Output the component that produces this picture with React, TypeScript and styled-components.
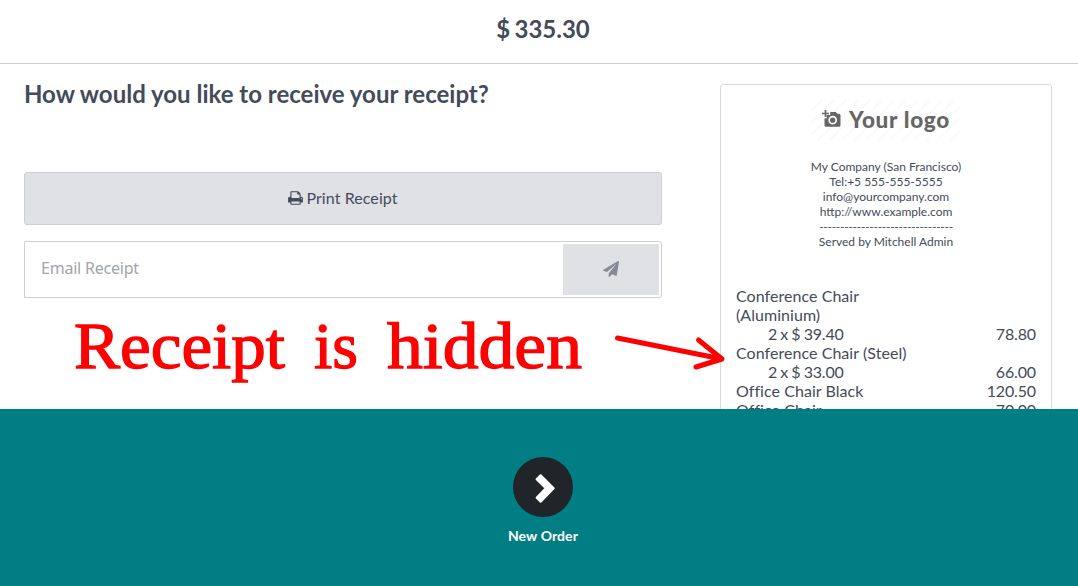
import React from "react";
import styled, { createGlobalStyle } from "styled-components";

const GlobalStyle = createGlobalStyle`
  * { box-sizing: border-box; }
  html, body { margin: 0; overflow: hidden; }
  body { background: #fff; color: #444b5a; font-family: Lato, sans-serif; font-size: 16px; }
`;

const Screen = styled.div`
  position: relative;
  display: flex;
  flex-direction: column;
  width: 1086px;
  height: 586px;
  overflow: hidden;
`;
const Header = styled.header`
  flex: 0 0 64px;
  padding-top: 14px;
  border-bottom: 1px solid #c9ccd2;
  text-align: center;
  font-size: 24px;
  font-weight: 700;
  line-height: 30px;
  word-spacing: -1.5px;
`;
const Content = styled.main`
  flex: 0 0 345px;
  display: flex;
  align-items: flex-start;
  gap: 58px;
  padding-left: 24px;
  overflow: hidden;
`;
const Options = styled.section`
  width: 638px;
  padding-top: 15px;
`;
const Title = styled.h2`
  margin: 0 0 63px;
  font-size: 24px;
  font-weight: 700;
  line-height: 30px;
`;
const PrintButton = styled.button`
  display: flex;
  align-items: center;
  justify-content: center;
  gap: 3px;
  width: 100%;
  height: 53px;
  margin-bottom: 16px;
  padding: 0 0 2px;
  border: 1px solid #cfcfd1;
  border-radius: 3px;
  background: #e0e1e5;
  color: inherit;
  font: inherit;
  letter-spacing: 0.08px;
`;
const EmailRow = styled.div`
  display: flex;
  height: 57px;
  padding: 2px;
  border: 1px solid #cfcfd1;
  border-radius: 0 3px 3px 0;
`;
const EmailInput = styled.input`
  flex: 1;
  min-width: 0;
  padding: 0 14px 3px;
  border: 0;
  background: none;
  font: 16px "Noto Sans", sans-serif;
  letter-spacing: -0.22px;
  &::placeholder { color: #a1a4aa; opacity: 1; }
`;
const SendButton = styled.button`
  display: grid;
  place-items: center;
  width: 96px;
  padding: 0 0 1px;
  border: 0;
  background: #e0e1e5;
  color: #858994;
`;
const Receipt = styled.section`
  width: 332px;
  height: 500px;
  margin-top: 20px;
  padding: 15px;
  border: 1px solid #d9d9db;
  border-radius: 3px;
`;
const Logo = styled.div`
  display: flex;
  align-items: center;
  gap: 8px;
  width: 150px;
  height: 40px;
  margin: 0 auto 19px;
  padding: 0 0 2px 11px;
  background: repeating-linear-gradient(135deg, #fff 0 7px, #fafafa 7px 8.5px);
  color: #666;
  font-size: 22.5px;
  font-weight: 900;
  letter-spacing: 0.7px;
  white-space: nowrap;
`;
const Contact = styled.div`
  margin-bottom: 37px;
  text-align: center;
  font-size: 12px;
  line-height: 15px;
`;
const Divider = styled.div`
  letter-spacing: -0.28px;
`;
const Line = styled.div<{ $indent?: boolean }>`
  display: flex;
  justify-content: space-between;
  align-items: flex-end;
  padding-left: ${(p) => (p.$indent ? 32 : 0)}px;
  line-height: 19px;
`;
const Product = styled.span`
  max-width: 180px;
  letter-spacing: 0.05px;
`;
const Quantity = styled.span`
  letter-spacing: -0.18px;
  word-spacing: -0.7px;
`;
const Price = styled.span`
  letter-spacing: -0.15px;
`;
const Footer = styled.footer`
  position: relative;
  flex: 1;
  display: flex;
  flex-direction: column;
  align-items: center;
  padding-top: 48px;
  background: #017e84;
  color: #fff;
  font-size: 14px;
  font-weight: 700;
  line-height: 18px;
  letter-spacing: 0.1px;
`;
const NextButton = styled.button`
  display: grid;
  place-items: center;
  width: 60px;
  height: 60px;
  margin-bottom: 10px;
  padding: 0;
  border: 0;
  border-radius: 50%;
  background: #212529;
  color: #fff;
`;
const Annotation = styled.svg`
  position: absolute;
  left: 60px;
  top: 300px;
  font-family: "Liberation Serif", serif;
  font-size: 66px;
`;

const PrintIcon = () => (
  <svg width="15" height="16" viewBox="0 0 1664 1792" fill="currentColor">
    <path d="M384 1536h896v-256h-896v256zM384 896h896v-384h-160q-40 0-68-28t-28-68v-160h-640v640zM1536 960q0-26-19-45t-45-19-45 19-19 45 19 45 45 19 45-19 19-45zM1664 960v416q0 13-9.5 22.5t-22.5 9.5h-224v160q0 40-28 68t-68 28h-960q-40 0-68-28t-28-68v-160h-224q-13 0-22.5-9.5t-9.5-22.5v-416q0-79 56.5-135.5t135.5-56.5h64v-544q0-40 28-68t68-28h672q40 0 88 20t76 48l152 152q28 28 48 76t20 88v256h64q79 0 135.5 56.5t56.5 135.5z" />
  </svg>
);
const PlaneIcon = () => (
  <svg width="16" height="16" viewBox="0 0 1792 1792" fill="currentColor">
    <path d="M1764 11q33 24 27 64l-256 1536q-5 29-32 45-14 8-31 8-11 0-24-5l-453-185-242 295q-18 23-49 23-13 0-22-4-19-7-30.5-23.5t-11.5-36.5v-349l864-1059-1069 925-395-162q-37-14-40-55-2-40 32-59l1664-960q15-9 32-9 20 0 36 11z" />
  </svg>
);
const CameraIcon = () => (
  <svg width="19" height="18" viewBox="0 0 19 18" fill="none">
    <path d="M3.5 0v7M0 3.5h7" stroke="#666" strokeWidth="1.7" />
    <path fill="#666" d="M8.2 2h5.6l1.5 1.8H17a1.5 1.5 0 0 1 1.5 1.5v10A1.5 1.5 0 0 1 17 16.8H4a1.5 1.5 0 0 1-1.5-1.5V8.2h2.2V5h3.5z" />
    <circle cx="10.7" cy="10.2" r="3.5" stroke="#fff" strokeWidth="1.7" />
  </svg>
);
const ChevronIcon = () => (
  <svg width="60" height="60" viewBox="0 0 60 60" fill="currentColor">
    <path d="M22.9 21.6l4-4a1 1 0 0 1 1.5 0l13 12.9a1 1 0 0 1 0 1.5l-13 13.4a1 1 0 0 1-1.5 0l-4-4a1 1 0 0 1 0-1.4l8.4-8.7-8.4-8.2a1 1 0 0 1 0-1.5z" />
  </svg>
);

const items = [
  { name: "Conference Chair (Aluminium)", qty: "2 x $ 39.40", price: "78.80" },
  { name: "Conference Chair (Steel)", qty: "2 x $ 33.00", price: "66.00" },
  { name: "Office Chair Black", price: "120.50" },
  { name: "Office Chair", price: "70.00" },
];

export default function App() {
  return (
    <>
      <GlobalStyle />
      <Screen>
        <Header>$ 335.30</Header>
        <Content>
          <Options>
            <Title>How would you like to receive your receipt?</Title>
            <PrintButton><PrintIcon />Print Receipt</PrintButton>
            <EmailRow>
              <EmailInput placeholder="Email Receipt" />
              <SendButton aria-label="Send"><PlaneIcon /></SendButton>
            </EmailRow>
          </Options>
          <Receipt>
            <Logo><CameraIcon />Your logo</Logo>
            <Contact>
              <div>My Company (San Francisco)</div>
              <div>Tel:+5 555-555-5555</div>
              <div>info@yourcompany.com</div>
              <div>http://www.example.com</div>
              <Divider>--------------------------------</Divider>
              <div>Served by Mitchell Admin</div>
            </Contact>
            {items.map((item) => (
              <React.Fragment key={item.name}>
                <Line><Product>{item.name}</Product>{!item.qty && <Price>{item.price}</Price>}</Line>
                {item.qty && <Line $indent><Quantity>{item.qty}</Quantity><Price>{item.price}</Price></Line>}
              </React.Fragment>
            ))}
          </Receipt>
        </Content>
        <Footer>
          <NextButton aria-label="New Order"><ChevronIcon /></NextButton>
          New Order
        </Footer>
        <Annotation width="680" height="100" viewBox="60 300 680 100" fill="#f00">
          <g stroke="#f00" strokeWidth="1.3">
            <text x="74" y="367.5" textLength="211" lengthAdjust="spacingAndGlyphs">Receipt</text>
            <text x="314" y="367.5" textLength="44" lengthAdjust="spacingAndGlyphs">is</text>
            <text x="387" y="367.5" textLength="195" lengthAdjust="spacingAndGlyphs">hidden</text>
          </g>
          <path d="M617.5 338L722 359M698.5 340L722 359L696 367" fill="none" stroke="#f00" strokeWidth="5" strokeLinecap="round" strokeLinejoin="round" />
        </Annotation>
      </Screen>
    </>
  );
}
